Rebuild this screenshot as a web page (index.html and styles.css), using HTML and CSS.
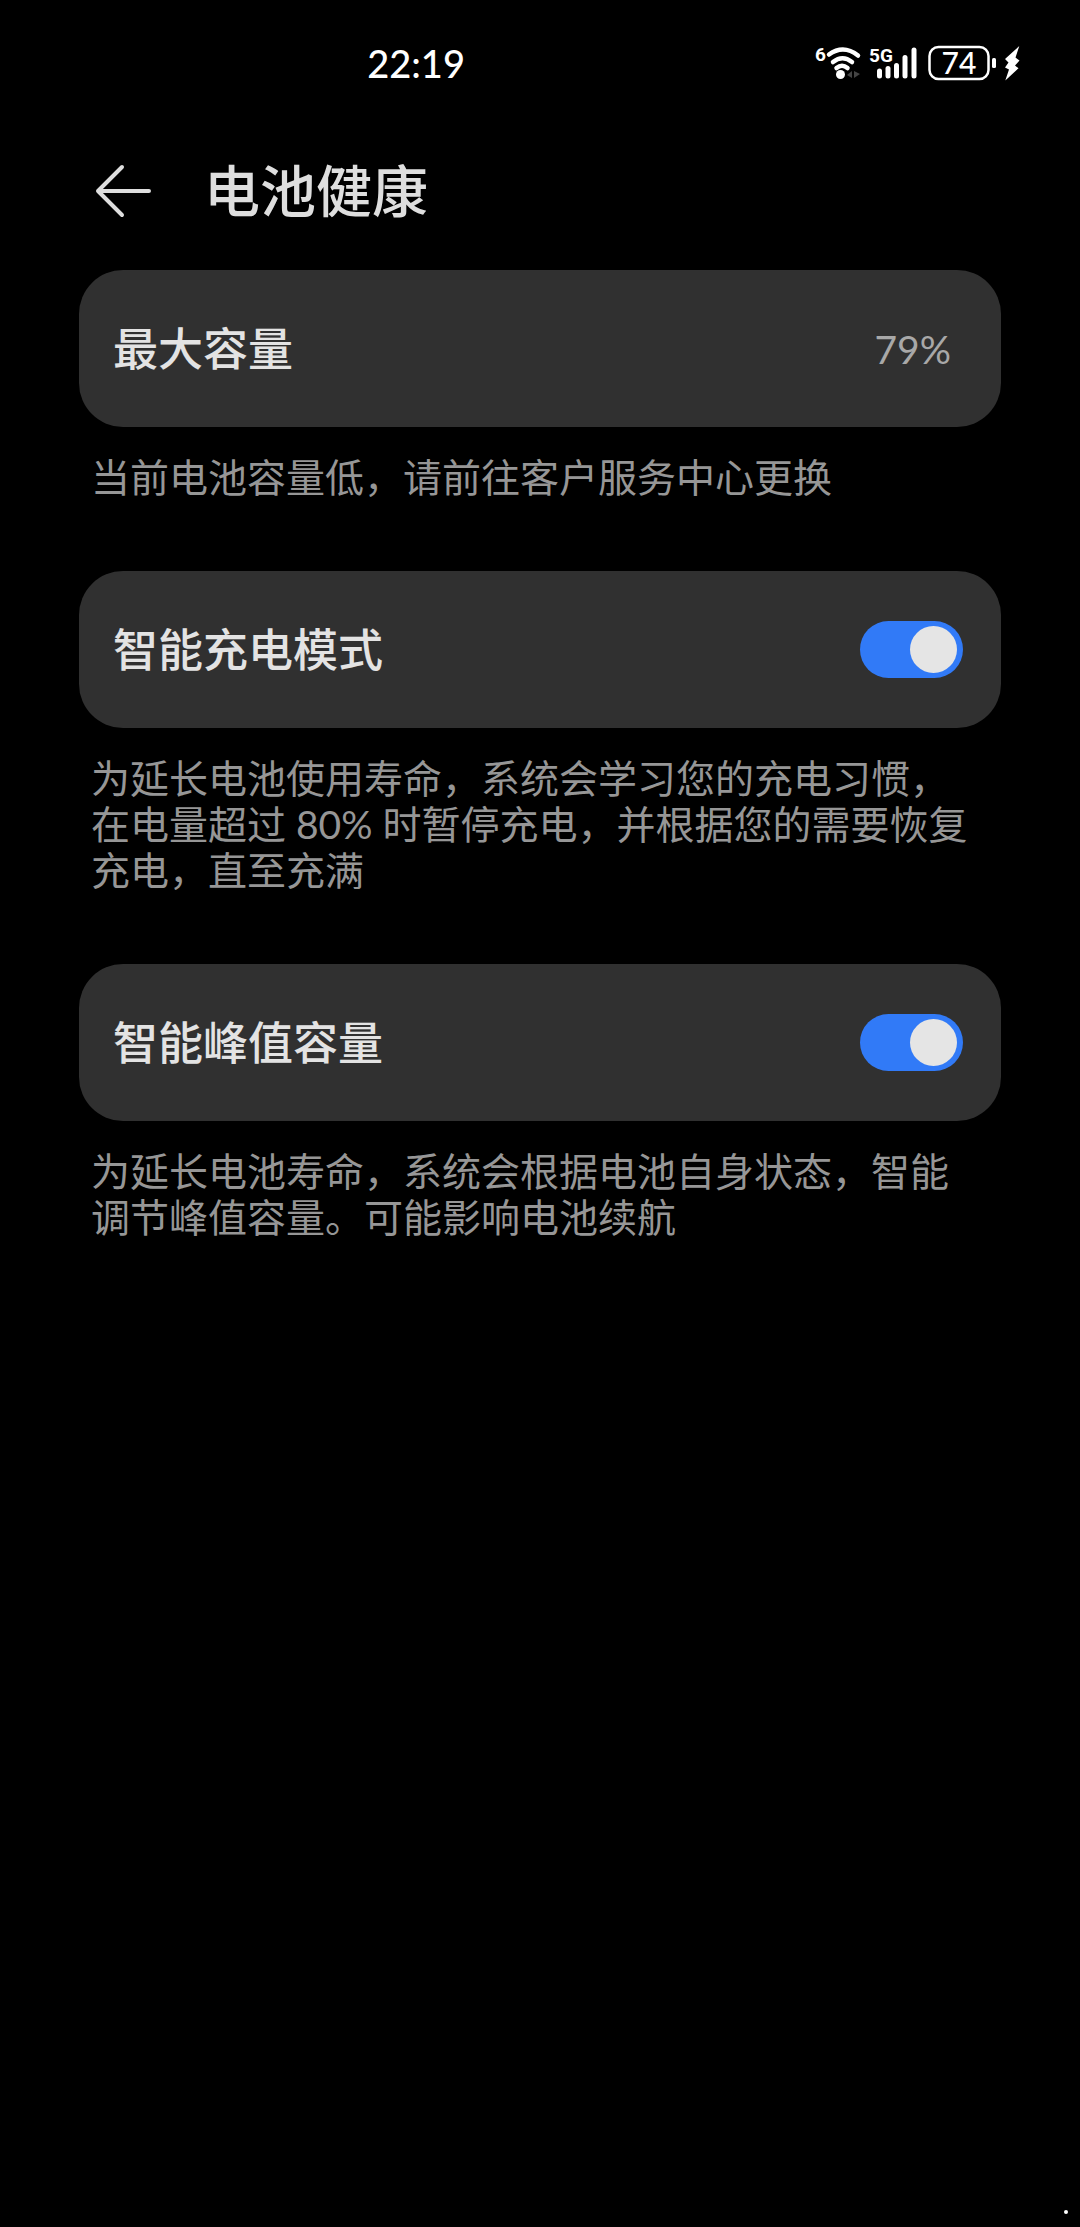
FILE: index.html
```html
<!DOCTYPE html>
<html lang="zh-CN">
<head>
<meta charset="utf-8">
<meta name="viewport" content="width=device-width, initial-scale=1">
<title>电池健康</title>
<link rel="stylesheet" href="styles.css">
</head>
<body>
<div class="status-bar">
  <time class="clock">22:19</time>
  <div class="status-icons">
    <svg class="icon-wifi" width="50" height="48" viewBox="-4 -6 50 48" role="img" aria-label="Wi-Fi 6">
      <text x="-1" y="16" class="tag">6</text>
      <g fill="none" stroke="#fff" stroke-width="4.500" stroke-linecap="round">
        <path d="M13 9.500Q27.500 -1 42 10.500"/>
        <path d="M17 17Q26.500 9.500 36 17"/>
        <path d="M20.500 23Q26 18.500 31.500 23"/>
      </g>
      <circle cx="24.500" cy="29.500" r="4.500" fill="#fff"/>
      <path d="M36 26l-5 4 5 3zM38 26l6 3-6 4z" fill="#444"/>
    </svg>
    <svg class="icon-signal" width="52" height="48" viewBox="-4 -6 52 48" role="img" aria-label="5G">
      <text x="-1" y="17" class="tag">5G</text>
      <g stroke="#fff" stroke-width="5" stroke-linecap="round">
        <path d="M9.500 26V31"/><path d="M18 23.500V31"/><path d="M26.500 20.500V31"/><path d="M35 12.500V31"/><path d="M44 5V31"/>
      </g>
    </svg>
    <svg class="icon-battery" width="68" height="48" viewBox="0 -6 68 48" role="img" aria-label="74%">
      <rect x="1.500" y="2" width="59" height="32" rx="9" fill="none" stroke="#fff" stroke-width="2.500"/>
      <rect x="64" y="13" width="4" height="10" rx="1.500" fill="#fff"/>
      <text x="31" y="29" text-anchor="middle" class="level">74</text>
    </svg>
    <svg class="icon-bolt" width="16" height="48" viewBox="0 -6 16 48" aria-hidden="true">
      <path d="M15.300 1L1 14l3.500 3.500L1 22.500l4 2L1.300 35.500 14.500 23.300 11 20.500 15.500 15.500 11.500 12.500z" fill="#fff"/>
    </svg>
  </div>
</div>

<header class="app-bar">
  <button class="back" type="button" aria-label="返回">
    <svg width="58" height="56" viewBox="0 0 58 56" fill="none" stroke="#dedede" stroke-width="4" stroke-linecap="round" stroke-linejoin="round">
      <path d="M28 4L4 28l24 24M4 28h51"/>
    </svg>
  </button>
  <h1 class="title">电池健康</h1>
</header>

<main class="settings">
  <section class="group">
    <div class="card">
      <h2 class="label">最大容量</h2>
      <span class="value">79%</span>
    </div>
    <p class="note">当前电池容量低，请前往客户服务中心更换</p>
  </section>
  <section class="group">
    <div class="card">
      <label class="label" for="smart-charge">智能充电模式</label>
      <input class="switch" id="smart-charge" type="checkbox" role="switch" checked>
    </div>
    <p class="note">为延长电池使用寿命，系统会学习您的充电习惯，在电量超过 80% 时暂停充电，并根据您的需要恢复充电，直至充满</p>
  </section>
  <section class="group">
    <div class="card">
      <label class="label" for="smart-peak">智能峰值容量</label>
      <input class="switch" id="smart-peak" type="checkbox" role="switch" checked>
    </div>
    <p class="note">为延长电池寿命，系统会根据电池自身状态，智能调节峰值容量。可能影响电池续航</p>
  </section>
</main>
<footer class="page-end"><span class="dot"></span></footer>
</body>
</html>
```
FILE: styles.css
```css
* {
  box-sizing: border-box;
}

body {
  margin: 0;
  min-height: 100vh;
  display: flex;
  flex-direction: column;
  background: #000;
  color: #e3e3e3;
  font-family: Lato, "Noto Sans CJK SC", sans-serif;
}

.status-bar {
  display: flex;
  justify-content: space-between;
  align-items: center;
  padding: 39px 60px 0 34%;
}

.clock {
  color: #fff;
  font-size: 38px;
  line-height: 48px;
  font-weight: 500;
}

.status-icons {
  display: flex;
  align-items: center;
}

.icon-wifi { margin-right: 4px; }
.icon-signal { margin-right: 10px; }
.icon-battery { margin-right: 8px; }

.tag {
  font: 700 19px Roboto, sans-serif;
  fill: #fff;
}

.level {
  font: 500 30px Lato, sans-serif;
  fill: #fff;
}

.app-bar {
  display: flex;
  align-items: center;
  gap: 52px;
  padding: 64px 94px 39px;
}

.back {
  display: flex;
  padding: 0;
  border: 0;
  background: none;
}

.title {
  margin: 0;
  color: #dedede;
  font-size: 56px;
  line-height: 80px;
  font-weight: 500;
}

.settings {
  display: flex;
  flex-direction: column;
  gap: 71px;
  padding: 0 79px;
}

.card {
  display: flex;
  justify-content: space-between;
  align-items: center;
  min-height: 157px;
  padding: 0 38px 0 34px;
  border-radius: 44px;
  background: #303030;
}

.label {
  margin: 0;
  font-size: 45px;
  line-height: 60px;
  font-weight: 500;
}

.value {
  padding-right: 12px;
  color: #a8a8a8;
  font-size: 39px;
  line-height: 60px;
}

.switch {
  appearance: none;
  display: flex;
  justify-content: flex-end;
  align-items: center;
  width: 103px;
  height: 57px;
  margin: 0;
  padding: 0 6px;
  border-radius: 29px;
  background: #317af7;
}

.switch::before {
  content: "";
  width: 47px;
  height: 47px;
  border-radius: 50%;
  background: #e5e5e5;
}

.switch:not(:checked) {
  justify-content: flex-start;
  background: #5a5a5a;
}

.note {
  margin: 27px 0 0;
  padding: 0 20px 0 12px;
  color: #969696;
  font-size: 39px;
  line-height: 46px;
}

.page-end {
  display: flex;
  justify-content: flex-end;
  margin-top: auto;
  padding: 0 12px 13px;
}

.dot {
  width: 4px;
  height: 4px;
  border-radius: 50%;
  background: #fff;
}
```
